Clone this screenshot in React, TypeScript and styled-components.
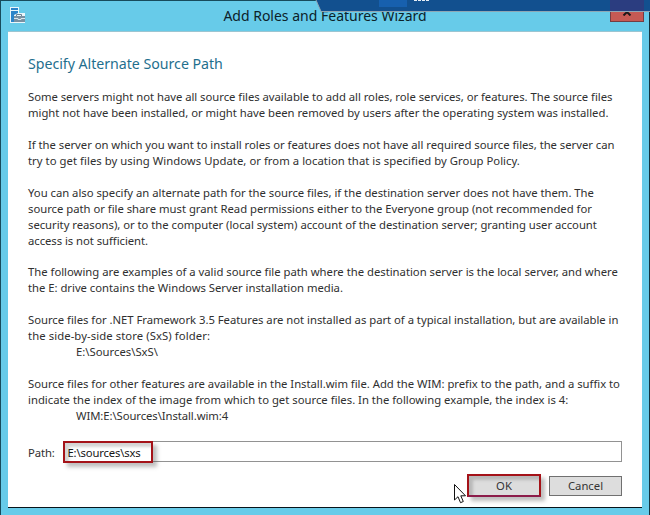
import React from 'react';
import styled, { createGlobalStyle } from 'styled-components';

const GlobalStyle = createGlobalStyle`
  * { box-sizing: border-box; }
  html, body { margin: 0; padding: 0; overflow: hidden; }
  body { font-family: 'Noto Sans', 'Open Sans', sans-serif; }
`;

const Window = styled.div`
  position: relative;
  display: flex;
  flex-direction: column;
  width: 650px;
  height: 515px;
  padding: 0 7px 7px;
  background: #67cbe9;
  border: 1px solid #174b5c;
  border-bottom: none;
  border-right-color: #12333f;
`;

const TitleBar = styled.header`
  display: flex;
  flex: 0 0 30px;
  justify-content: center;
  position: relative;
`;

const WindowIcon = styled.svg`
  position: absolute;
  left: 1px;
  top: 5px;
`;

const WindowTitle = styled.h1`
  margin: 0;
  padding-top: 5px;
  font-size: 14px;
  line-height: 20px;
  font-weight: 400;
  color: #0c2229;
`;

const CloseButton = styled.button`
  position: absolute;
  top: -1px;
  right: -2px;
  width: 34px;
  height: 22px;
  padding: 0;
  background: #c65a54;
  border: 1px solid #743d43;
  border-top: none;
  svg { display: block; margin: 3px auto 0; }
`;

const ConnectionBar = styled.svg`
  position: absolute;
  top: -1px;
  right: -1px;
`;

const Body = styled.main`
  display: flex;
  flex: 1;
  flex-direction: column;
  padding: 22px 20px 0;
  background: #fff;
  border-top: 1px solid #9cc5d1;
  border-bottom: 1px solid #07141a;
`;

const Heading = styled.h2`
  margin: 0 0 15px;
  font-size: 14.2px;
  line-height: 20px;
  letter-spacing: -0.03px;
  font-weight: 400;
  color: #1f6f8e;
`;

const Paragraph = styled.p<{ $gap?: number }>`
  margin: 0 0 ${(p) => p.$gap ?? 16}px;
  color: #303030;
`;

const Line = styled.span<{ $track?: number; $indent?: boolean }>`
  display: block;
  padding-left: ${(p) => (p.$indent ? 48 : 0)}px;
  font-size: 11.3px;
  line-height: 16px;
  letter-spacing: ${(p) => p.$track ?? 0}px;
  white-space: nowrap;
`;

const PathRow = styled.div`
  display: flex;
  align-items: flex-start;
  height: 22px;
  width: 594px;
`;

const PathLabel = styled.label`
  width: 35px;
  font-size: 11.3px;
  line-height: 23px;
  letter-spacing: -0.1px;
  color: #303030;
`;

const PathField = styled.div`
  display: flex;
  flex: 1;
  align-items: flex-start;
  height: 21px;
  border: 1px solid #929292;
`;

const highlight = `
  border: 2px solid #a41218;
  box-shadow: 4px 4px 4px rgba(70, 70, 70, 0.35), inset 4px 4px 3px rgba(70, 70, 70, 0.24);
`;

const PathValue = styled.div`
  ${highlight}
  flex: 0 0 90px;
  height: 22px;
  margin: -1px 0 0 -1px;
  padding-left: 2.5px;
  font-size: 11.3px;
  line-height: 19px;
  letter-spacing: -0.17px;
  color: #161616;
`;

const Actions = styled.div`
  display: flex;
  justify-content: flex-end;
  align-items: center;
  gap: 8px;
  width: 594px;
  height: 23px;
  margin-top: 11px;
`;

const Button = styled.button<{ $highlighted?: boolean }>`
  width: 73px;
  height: 20px;
  padding: 0 0 1px;
  font: 11.3px 'Noto Sans', sans-serif;
  line-height: 17px;
  color: #353535;
  background: #dddddd;
  border: 1px solid #707070;
  ${(p) => p.$highlighted && `${highlight} width: 74px; height: 23px; border-bottom-color: #8c1c4a;`}
`;

const Cursor = styled.svg`
  position: absolute;
  left: 452px;
  top: 482px;
`;

export default function App() {
  return (
    <>
      <GlobalStyle />
      <Window>
        <TitleBar>
          <WindowIcon width="18" height="18" viewBox="0 0 18 18">
            <path d="M1 1h9v6h6v10H1z" fill="#eaf6fb" />
            <path d="M2 2h7v2H2zM2 5h7v2L5 9v7H2z" fill="#2b84c9" />
            <path d="M7.500 10V8.500h5V10" fill="none" stroke="#6b8294" />
            <path d="M5 10h11v6H5z" fill="#7890a2" />
            <path d="M5 12.500h4v1h3v-1h4" fill="none" stroke="#dbe7ec" />
          </WindowIcon>
          <WindowTitle>Add Roles and Features Wizard</WindowTitle>
          <CloseButton aria-label="Close">
            <svg width="10" height="8" viewBox="0 0 10 8">
              <path d="M1.500 0.500l7 7M8.500 0.500l-7 7" stroke="#1d1718" strokeWidth="2" />
            </svg>
          </CloseButton>
        </TitleBar>
        <Body>
          <Heading>Specify Alternate Source Path</Heading>
          <Paragraph>
            <Line $track={-0.034}>Some servers might not have all source files available to add all roles, role services, or features. The source files</Line>
            <Line $track={-0.029}>might not have been installed, or might have been removed by users after the operating system was installed.</Line>
          </Paragraph>
          <Paragraph>
            <Line $track={-0.036}>If the server on which you want to install roles or features does not have all required source files, the server can</Line>
            <Line $track={0.039}>try to get files by using Windows Update, or from a location that is specified by Group Policy.</Line>
          </Paragraph>
          <Paragraph $gap={15}>
            <Line $track={-0.018}>You can also specify an alternate path for the source files, if the destination server does not have them. The</Line>
            <Line $track={-0.023}>source path or file share must grant Read permissions either to the Everyone group (not recommended for</Line>
            <Line $track={-0.027}>security reasons), or to the computer (local system) account of the destination server; granting user account</Line>
            <Line $track={-0.05}>access is not sufficient.</Line>
          </Paragraph>
          <Paragraph>
            <Line $track={-0.014}>The following are examples of a valid source file path where the destination server is the local server, and where</Line>
            <Line $track={-0.025}>the E: drive contains the Windows Server installation media.</Line>
          </Paragraph>
          <Paragraph>
            <Line $track={-0.025}>Source files for .NET Framework 3.5 Features are not installed as part of a typical installation, but are available in</Line>
            <Line $track={0.08}>the side-by-side store (SxS) folder:</Line>
            <Line $indent>E:\Sources\SxS\</Line>
          </Paragraph>
          <Paragraph $gap={17}>
            <Line $track={-0.025}>Source files for other features are available in the Install.wim file. Add the WIM: prefix to the path, and a suffix to</Line>
            <Line>indicate the index of the image from which to get source files. In the following example, the index is 4:</Line>
            <Line $indent $track={-0.08}>WIM:E:\Sources\Install.wim:4</Line>
          </Paragraph>
          <PathRow>
            <PathLabel>Path:</PathLabel>
            <PathField>
              <PathValue>E:\sources\sxs</PathValue>
            </PathField>
          </PathRow>
          <Actions>
            <Button $highlighted>OK</Button>
            <Button>Cancel</Button>
          </Actions>
        </Body>
        <ConnectionBar width="335" height="13" viewBox="0 0 335 13">
          <path d="M1 0l5 11.500H335V0z" fill="#12508f" />
          <path d="M64 0h28v7H64z" fill="#1760ae" />
          <path d="M295 0h34v11h-34z" fill="#2b3d80" />
          <path d="M1 0l5 11.500H335" fill="none" stroke="#8fa6b4" />
          <path d="M99 .5h15" stroke="#e5edf5" strokeDasharray="3 1" />
        </ConnectionBar>
        <Cursor width="14" height="22" viewBox="0 0 14 22">
          <path d="M1.500 1.500v15.500l3.500-3.300 2.500 6 2.800-1.200-2.500-5.700h4.700z" fill="#fff" stroke="#101010" />
        </Cursor>
      </Window>
    </>
  );
}
